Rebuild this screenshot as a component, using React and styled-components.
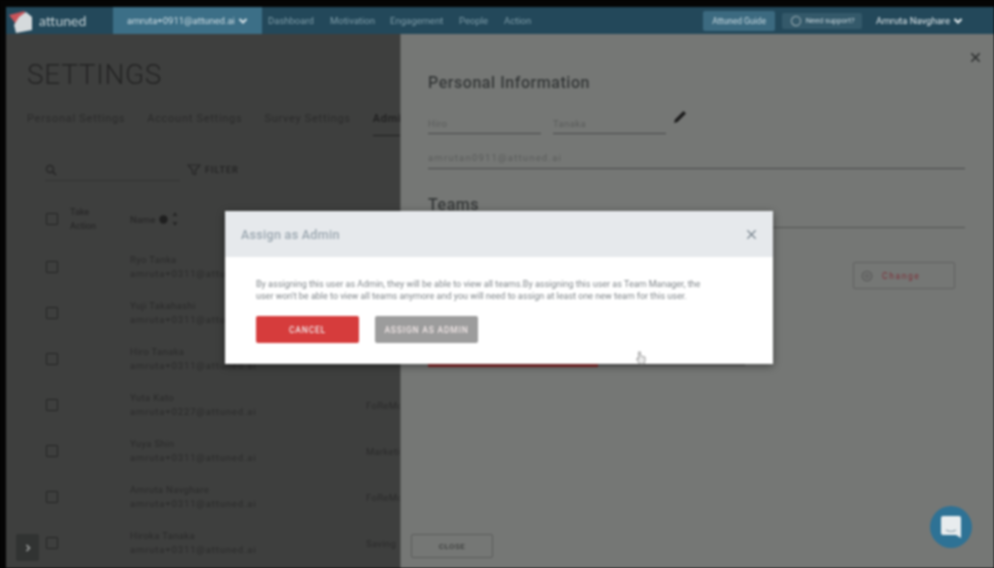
import React from 'react';
import styled, { createGlobalStyle } from 'styled-components';

const GlobalStyle = createGlobalStyle`
  html, body {
    margin: 0;
    padding: 0;
    background: #050505;
    font-family: Roboto, "Liberation Sans", sans-serif;
  }
`;

const users = [
  { name: 'Ryo Tanka', email: 'amruta+0311@attuned.ai', team: '' },
  { name: 'Yuji Takahashi', email: 'amruta+0311@attuned.ai', team: '' },
  { name: 'Hiro Tanaka', email: 'amruta+0311@attuned.ai', team: '' },
  { name: 'Yuta Kato', email: 'amruta+0227@attuned.ai', team: 'FoReMo' },
  { name: 'Yuya Shin', email: 'amruta+0311@attuned.ai', team: 'Marketing' },
  { name: 'Amruta Navghare', email: 'amruta+0311@attuned.ai', team: 'FoReMo' },
  { name: 'Hiroka Tanaka', email: 'amruta+0311@attuned.ai', team: 'Saving' }
];

const navLinks = [
  { label: 'Dashboard', width: 62 },
  { label: 'Motivation', width: 60 },
  { label: 'Engagement', width: 69 },
  { label: 'People', width: 45 },
  { label: 'Action', width: 40 }
];

const Chevron = ({ size = 10 }) => (
  <svg width={size} height={size} viewBox="0 0 10 10" fill="none">
    <path d="M1.5 3l3.5 3.5L8.5 3" stroke="currentColor" strokeWidth="2.2" />
  </svg>
);

const Cross = ({ size = 12, width = 1.6 }) => (
  <svg width={size} height={size} viewBox="0 0 12 12" fill="none">
    <path d="M1.5 1.5l9 9M10.5 1.5l-9 9" stroke="currentColor" strokeWidth={width} />
  </svg>
);

export default function App() {
  return (
    <Page>
      <GlobalStyle />
      <Frame>
        <Nav>
          <Brand>
            <svg width="26" height="26" viewBox="0 0 26 26">
              <polygon points="2,7 18,3 12,20" fill="#c9545a" />
              <polygon points="12,9 19,4 25,9 25,22 9,25 7,17" fill="#d5dadc" />
            </svg>
            <BrandName>attuned</BrandName>
          </Brand>
          <Account>amruta+0911@attuned.ai <Chevron /></Account>
          {navLinks.map((l) => (
            <NavLink key={l.label} $w={l.width}>{l.label}</NavLink>
          ))}
          <NavRight>
            <GuideButton>Attuned Guide</GuideButton>
            <SupportButton>
              <svg width="12" height="12" viewBox="0 0 12 12" fill="none">
                <circle cx="6" cy="6" r="4.6" stroke="#8ea2aa" strokeWidth="1.2" />
              </svg>
              Need support?
            </SupportButton>
            <UserName>Amruta Navghare <Chevron /></UserName>
          </NavRight>
        </Nav>
        <Body>
          <Left>
            <Title>SETTINGS</Title>
            <Tabs>
              <Tab>Personal Settings</Tab>
              <Tab>Account Settings</Tab>
              <Tab>Survey Settings</Tab>
              <Tab $active>Admin</Tab>
            </Tabs>
            <Tools>
              <SearchBox>
                <svg width="12" height="12" viewBox="0 0 12 12" fill="none">
                  <circle cx="5" cy="5" r="3.5" stroke="#262626" strokeWidth="1.4" />
                  <path d="M7.6 7.6L11 11" stroke="#262626" strokeWidth="1.6" />
                </svg>
              </SearchBox>
              <FilterLabel>
                <svg width="14" height="12" viewBox="0 0 14 12" fill="none">
                  <path d="M1 1h12L8.5 6v4.5l-3-1V6z" stroke="#262626" strokeWidth="1.2" />
                </svg>
                FILTER
              </FilterLabel>
            </Tools>
            <HeadRow>
              <Check />
              <TakeAction>Take<br />Action</TakeAction>
              <NameHead>
                Name
                <svg width="9" height="9" viewBox="0 0 9 9">
                  <circle cx="4.5" cy="4.5" r="4.2" fill="#1f1f1f" />
                </svg>
                <svg width="6" height="16" viewBox="0 0 6 16">
                  <path d="M3 1L5.5 5h-5zM3 15L.5 11h5z" fill="#262626" />
                </svg>
              </NameHead>
            </HeadRow>
            <UserList>
              {users.map((u) => (
                <UserRow key={u.name}>
                  <Check />
                  <UserCell>
                    <div>{u.name}</div>
                    <UserEmail>{u.email}</UserEmail>
                  </UserCell>
                  <TeamCell>{u.team}</TeamCell>
                </UserRow>
              ))}
            </UserList>
          </Left>
          <Panel>
            <PanelClose><Cross size={11} /></PanelClose>
            <SectionTitle>Personal Information</SectionTitle>
            <NameFields>
              <Field $w={113}>Hiro</Field>
              <Field $w={113}>Tanaka</Field>
              <svg width="16" height="16" viewBox="0 0 16 16">
                <path d="M2 14l1-3.5L11.5 2 14 4.500 5.500 13z" fill="#1c1c1c" />
              </svg>
            </NameFields>
            <EmailField>amrutan0911@attuned.ai</EmailField>
            <SectionTitle $teams>Teams</SectionTitle>
            <TeamsRule />
            <ChangeRow>
              <ChangeButton>
                <svg width="12" height="12" viewBox="0 0 12 12" fill="none">
                  <circle cx="6" cy="6" r="4.800" stroke="#565656" strokeWidth="1.1" />
                  <circle cx="6" cy="6" r="1.800" stroke="#565656" strokeWidth="1" />
                </svg>
                Change
              </ChangeButton>
            </ChangeRow>
            <RedRow>
              <RedBar />
              <GreyBar />
            </RedRow>
            <CloseButton>CLOSE</CloseButton>
          </Panel>
        </Body>
      </Frame>

      <Modal>
        <ModalHead>
          <ModalTitle>Assign as Admin</ModalTitle>
          <ModalClose><Cross size={11} width={1.5} /></ModalClose>
        </ModalHead>
        <ModalBody>
          <ModalText>
            By assigning this user as Admin, they will be able to view all teams.By assigning this user as Team Manager, the
            user won't be able to view all teams anymore and you will need to assign at least one new team for this user.
          </ModalText>
          <ModalButtons>
            <ModalButton $color="#d63c3c">CANCEL</ModalButton>
            <ModalButton $color="#9c9c9c">ASSIGN AS ADMIN</ModalButton>
          </ModalButtons>
        </ModalBody>
      </Modal>

      <Pointer>
        <svg width="10" height="14" viewBox="0 0 10 14" fill="#e9e9e9" stroke="#8a8a8a" strokeWidth="0.8">
          <path d="M2.500 1v7L1 7v2l2.500 4H8l1-3V6L4.500 5V1z" />
        </svg>
      </Pointer>

      <SideToggle>
        <svg width="6" height="8" viewBox="0 0 6 8" fill="none">
          <path d="M1.500 1l3 3-3 3" stroke="#a5a8a7" strokeWidth="1.500" />
        </svg>
      </SideToggle>

      <ChatBubble>
        <svg width="22" height="24" viewBox="0 0 22 24">
          <path d="M3 1h16a2 2 0 0 1 2 2v20l-5-3H3a2 2 0 0 1-2-2V3a2 2 0 0 1 2-2z" fill="#e8ecee" />
          <path d="M6 15q5 3 10 0" fill="none" stroke="#8ea3ae" strokeWidth="1.200" />
        </svg>
      </ChatBubble>
    </Page>
  );
}

const Page = styled.div`
  position: relative;
  width: 994px;
  height: 568px;
  overflow: hidden;
  background: #050505;
  filter: blur(0.8px);
`;

const Frame = styled.div`
  display: flex;
  flex-direction: column;
  height: 561px;
  padding: 7px 0 0 6px;
`;

const Nav = styled.div`
  display: flex;
  align-items: stretch;
  flex: 0 0 27px;
  height: 27px;
  background: #23485a;
`;

const Brand = styled.div`
  display: flex;
  align-items: center;
  gap: 6px;
  width: 107px;
  padding-left: 1px;
  box-sizing: border-box;
`;

const BrandName = styled.span`
  font-family: Lato, sans-serif;
  font-size: 14px;
  color: #c3d0d4;
`;

const Account = styled.div`
  display: flex;
  align-items: center;
  justify-content: center;
  gap: 3px;
  width: 149px;
  margin-right: 6px;
  background: #3c6f87;
  color: #cfdde3;
  font-size: 9.5px;
`;

const NavLink = styled.div`
  display: flex;
  align-items: center;
  width: ${(p) => p.$w}px;
  color: #7e9ca8;
  font-size: 9.5px;
`;

const NavRight = styled.div`
  display: flex;
  align-items: center;
  margin-left: auto;
  padding-right: 31px;
`;

const GuideButton = styled.div`
  display: flex;
  align-items: center;
  justify-content: center;
  width: 72px;
  height: 20px;
  margin-right: 7px;
  border-radius: 2px;
  background: #3c6a80;
  color: #c8d9e0;
  font-size: 8.5px;
`;

const SupportButton = styled.div`
  display: flex;
  align-items: center;
  justify-content: center;
  gap: 4px;
  width: 80px;
  height: 16px;
  margin-right: 14px;
  border-radius: 2px;
  background: #34596a;
  color: #c8d6dc;
  font-size: 7.5px;
`;

const UserName = styled.div`
  display: flex;
  align-items: center;
  gap: 3px;
  color: #dfe7ea;
  font-size: 9.5px;
`;

const Body = styled.div`
  display: flex;
  flex: 1;
  min-height: 0;
`;

const Left = styled.div`
  flex: 0 0 394px;
  width: 394px;
  overflow: hidden;
  box-sizing: border-box;
  padding-left: 21px;
  background: #3e3f3e;
  color: #272727;
`;

const Title = styled.div`
  margin-top: 25px;
  font-size: 28px;
  font-weight: 300;
  line-height: 32px;
  letter-spacing: 0.7px;
  color: #232323;
`;

const Tabs = styled.div`
  display: flex;
  gap: 22px;
  margin-top: 20px;
  width: 500px;
`;

const Tab = styled.div`
  padding-bottom: 8px;
  font-size: 11px;
  line-height: 16px;
  letter-spacing: 0.72px;
  font-weight: ${(p) => (p.$active ? 500 : 400)};
  color: ${(p) => (p.$active ? '#1e1e1e' : '#2b2b2b')};
  border-bottom: 1px solid ${(p) => (p.$active ? '#1e1e1e' : 'transparent')};
`;

const Tools = styled.div`
  display: flex;
  align-items: flex-start;
  margin-top: 24px;
  margin-left: 18px;
`;

const SearchBox = styled.div`
  width: 135px;
  height: 21px;
  box-sizing: border-box;
  padding-top: 4px;
  border-bottom: 1px solid #333;
  line-height: 0;
`;

const FilterLabel = styled.div`
  display: flex;
  align-items: center;
  gap: 4px;
  height: 20px;
  margin-left: 7px;
  font-size: 9px;
  font-weight: 700;
  letter-spacing: 1px;
  color: #262626;
`;

const Check = styled.div`
  flex: 0 0 auto;
  width: 12px;
  height: 12px;
  border: 1px solid #242424;
  border-radius: 1px;
  box-sizing: border-box;
`;

const HeadRow = styled.div`
  display: flex;
  align-items: center;
  height: 30px;
  margin-top: 23px;
  margin-left: 19px;
`;

const TakeAction = styled.div`
  width: 60px;
  margin-left: 12px;
  font-size: 9px;
  line-height: 14px;
  font-weight: 500;
  color: #292929;
`;

const NameHead = styled.div`
  display: flex;
  align-items: center;
  gap: 4px;
  font-size: 9.5px;
  font-weight: 500;
  color: #292929;
`;

const UserList = styled.div`
  margin-top: 10px;
`;

const UserRow = styled.div`
  display: flex;
  align-items: center;
  height: 46px;
  margin-left: 19px;
`;

const UserCell = styled.div`
  flex: 0 0 auto;
  width: 236px;
  margin-left: 72px;
  font-size: 9.5px;
  line-height: 14px;
  letter-spacing: 0.35px;
  color: #2a2a2a;
  white-space: nowrap;
`;

const UserEmail = styled.div`
  letter-spacing: 0.85px;
`;

const TeamCell = styled.div`
  font-size: 9.5px;
  letter-spacing: 0.3px;
  color: #2a2a2a;
  white-space: nowrap;
`;

const Panel = styled.div`
  position: relative;
  display: flex;
  flex: 1;
  flex-direction: column;
  box-sizing: border-box;
  padding: 0 29px 10px 27px;
  background: #757775;
  border-left: 1px solid #5c5d5c;
`;

const PanelClose = styled.div`
  position: absolute;
  top: 18px;
  right: 13px;
  color: #2f3131;
  line-height: 0;
`;

const SectionTitle = styled.div`
  margin-top: ${(p) => (p.$teams ? '26px' : '39px')};
  font-size: 16px;
  line-height: 20px;
  font-weight: 500;
  letter-spacing: 0.55px;
  color: #353838;
`;

const NameFields = styled.div`
  display: flex;
  align-items: flex-start;
  gap: 12px;
  margin-top: 17px;

  svg {
    margin: -1px 0 0 -6px;
  }
`;

const Field = styled.div`
  width: ${(p) => p.$w}px;
  height: 24px;
  box-sizing: border-box;
  padding-top: 8px;
  border-bottom: 1px solid #474848;
  font-size: 9.5px;
  letter-spacing: 0.4px;
  color: #595b5a;
`;

const EmailField = styled(Field)`
  width: 537px;
  height: 24px;
  margin-top: 11px;
  padding-top: 7px;
  letter-spacing: 1.2px;
`;

const TeamsRule = styled.div`
  margin-top: 12px;
  height: 1px;
  background: #525352;
`;

const ChangeRow = styled.div`
  display: flex;
  justify-content: flex-end;
  margin-top: 34px;
  padding-right: 10px;
`;

const ChangeButton = styled.div`
  display: flex;
  align-items: center;
  gap: 9px;
  width: 102px;
  height: 27px;
  box-sizing: border-box;
  padding-left: 7px;
  border: 1px solid #5f605f;
  border-radius: 2px;
  font-size: 8.5px;
  letter-spacing: 1.6px;
  color: #7e2f38;
`;

const RedRow = styled.div`
  display: flex;
  margin-top: 71px;
`;

const RedBar = styled.div`
  width: 170px;
  height: 7px;
  background: #8b2a2b;
`;

const GreyBar = styled.div`
  width: 147px;
  height: 6px;
  background: #5f605f;
`;

const CloseButton = styled.div`
  display: flex;
  align-items: center;
  justify-content: center;
  width: 82px;
  height: 24px;
  margin-top: auto;
  margin-left: -17px;
  box-sizing: border-box;
  border: 1px solid #5a5b5a;
  border-radius: 2px;
  font-size: 8px;
  letter-spacing: 0.5px;
  font-weight: 500;
  color: #3a3c3b;
`;

const Modal = styled.div`
  position: absolute;
  left: 225px;
  top: 211px;
  width: 548px;
  height: 153px;
  background: #fff;
  box-shadow: 0 2px 8px rgba(0, 0, 0, 0.45);
`;

const ModalHead = styled.div`
  display: flex;
  align-items: center;
  justify-content: space-between;
  height: 46px;
  padding: 0 16px;
  background: #e6e9ec;
`;

const ModalTitle = styled.div`
  font-size: 12.5px;
  font-weight: 500;
  letter-spacing: 0.3px;
  color: #9aa6af;
`;

const ModalClose = styled.div`
  color: #707d87;
  line-height: 0;
`;

const ModalBody = styled.div`
  padding: 21px 31px 0;
`;

const ModalText = styled.div`
  width: 452px;
  font-size: 9px;
  line-height: 12px;
  color: #7f8589;
`;

const ModalButtons = styled.div`
  display: flex;
  gap: 16px;
  margin-top: 14px;
`;

const ModalButton = styled.div`
  display: flex;
  align-items: center;
  justify-content: center;
  width: 103px;
  height: 27px;
  border-radius: 2px;
  background: ${(p) => p.$color};
  color: #f0e6e6;
  font-size: 8.5px;
  font-weight: 500;
  letter-spacing: 0.8px;
`;

const Pointer = styled.div`
  position: absolute;
  left: 636px;
  top: 351px;
  line-height: 0;
`;

const SideToggle = styled.div`
  position: absolute;
  left: 16px;
  top: 534px;
  display: flex;
  align-items: center;
  justify-content: center;
  width: 23px;
  height: 27px;
  border-radius: 2px;
  background: #313332;
`;

const ChatBubble = styled.div`
  position: absolute;
  left: 930px;
  top: 506px;
  display: flex;
  align-items: center;
  justify-content: center;
  width: 42px;
  height: 42px;
  border-radius: 50%;
  background: #2e7295;
`;
